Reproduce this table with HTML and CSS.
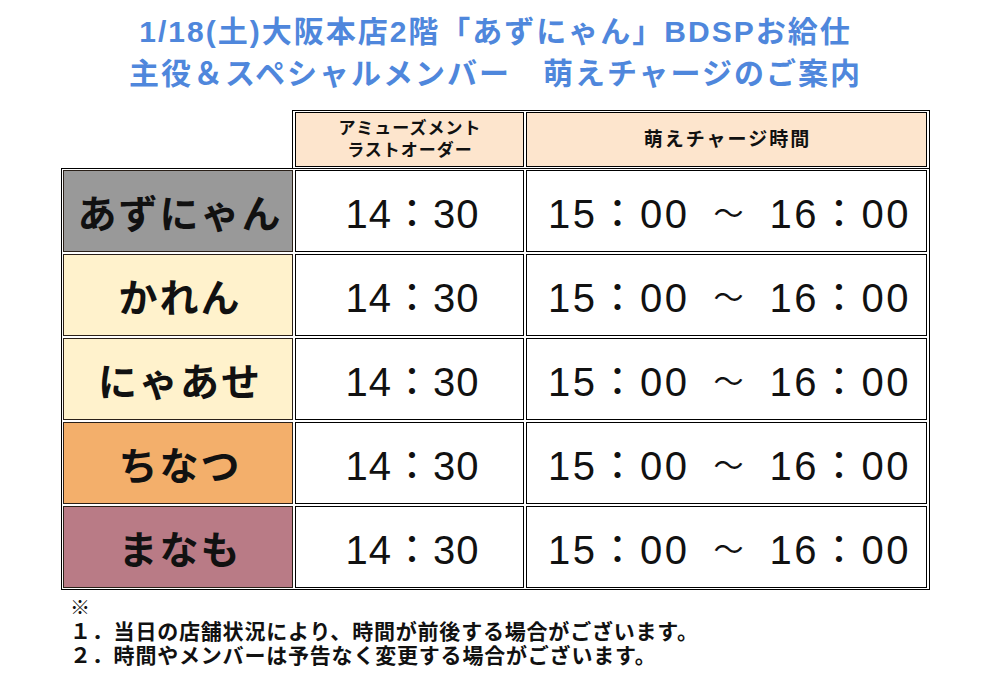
FILE: index.html
```html
<!DOCTYPE html>
<html lang="ja">
<head>
<meta charset="utf-8">
<link rel="stylesheet" href="styles.css">
</head>
<body>
<div class="page">
  <h1 class="title">
    <span class="tline">1/18(土)大阪本店2階「あずにゃん」BDSPお給仕</span>
    <span class="tline">主役＆スペシャルメンバー　萌えチャージのご案内</span>
  </h1>
  <div class="schedule">
    <div class="head-box">
      <div class="hcell small">アミューズメント<br>ラストオーダー</div>
      <div class="hcell">萌えチャージ時間</div>
    </div>
    <div class="body-box">
      <div class="name grey">あずにゃん</div>
      <div class="time">14：30</div>
      <div class="time range">15：00<span class="tilde">～</span>16：00</div>

      <div class="name cream">かれん</div>
      <div class="time">14：30</div>
      <div class="time range">15：00<span class="tilde">～</span>16：00</div>

      <div class="name cream">にゃあせ</div>
      <div class="time">14：30</div>
      <div class="time range">15：00<span class="tilde">～</span>16：00</div>

      <div class="name orange">ちなつ</div>
      <div class="time">14：30</div>
      <div class="time range">15：00<span class="tilde">～</span>16：00</div>

      <div class="name mauve">まなも</div>
      <div class="time">14：30</div>
      <div class="time range">15：00<span class="tilde">～</span>16：00</div>
    </div>
  </div>
  <div class="notes">
    <div class="note-mark">※</div>
    <div class="note">１．当日の店舗状況により、時間が前後する場合がございます。</div>
    <div class="note">２．時間やメンバーは予告なく変更する場合がございます。</div>
  </div>
</div>
</body>
</html>
```

FILE: styles.css
```css
html, body {
  margin: 0;
  padding: 0;
  background: #ffffff;
}
body {
  font-family: "Liberation Sans", "Noto Sans CJK JP", sans-serif;
  color: #111;
}
.page {
  width: 869px;
  margin-left: 61px;
  padding-top: 11px;
}
.title {
  margin: 0;
  display: flex;
  flex-direction: column;
  align-items: center;
  font-size: 30px;
  line-height: 42px;
  font-weight: 700;
  letter-spacing: 2px;
  color: #4f87dc;
}
.schedule {
  margin-top: 15px;
  display: flex;
  flex-direction: column;
}
.head-box {
  margin-left: 231px;
  border: 1px solid #000;
  border-bottom: none;
  padding: 1px 1px 1px 2px;
  display: grid;
  grid-template-columns: 229px 401px;
  column-gap: 2px;
}
.hcell {
  height: 55px;
  box-sizing: border-box;
  border: 1px solid #000;
  background: #fde5cd;
  display: flex;
  align-items: center;
  justify-content: center;
  text-align: center;
  font-weight: 700;
  font-size: 19px;
  letter-spacing: 2px;
  padding-left: 2px;
  line-height: 22px;
}
.hcell.small {
  font-size: 17px;
  letter-spacing: 1px;
  padding-left: 1px;
}
.body-box {
  border: 1px solid #000;
  padding: 1px;
  display: grid;
  grid-template-columns: 230px 229px 401px;
  grid-auto-rows: 82px;
  gap: 2px;
}
.name, .time {
  box-sizing: border-box;
  border: 1px solid #000;
  display: flex;
  align-items: center;
  justify-content: center;
}
.name {
  font-weight: 700;
  font-size: 39px;
  letter-spacing: 2px;
  padding-left: 4px;
  border-color: #2a2018;
}
.grey { background: #999999; }
.cream { background: #fff2cc; }
.orange { background: #f3af6b; }
.mauve { background: #b97b86; }
.time {
  background: #fff;
  font-size: 40px;
  letter-spacing: 1px;
  padding-left: 6px;
  white-space: pre;
}
.time.range {
  letter-spacing: 2.5px;
  padding-left: 6px;
}
.tilde {
  font-size: 30px;
  margin: 0 26px 0 24px;
  letter-spacing: 0;
}
.notes {
  padding-left: 9px;
  padding-top: 6px;
  font-weight: 700;
  font-size: 21px;
  line-height: 24px;
  letter-spacing: 0.8px;
}
.note-mark {
  font-size: 20px;
}
```
